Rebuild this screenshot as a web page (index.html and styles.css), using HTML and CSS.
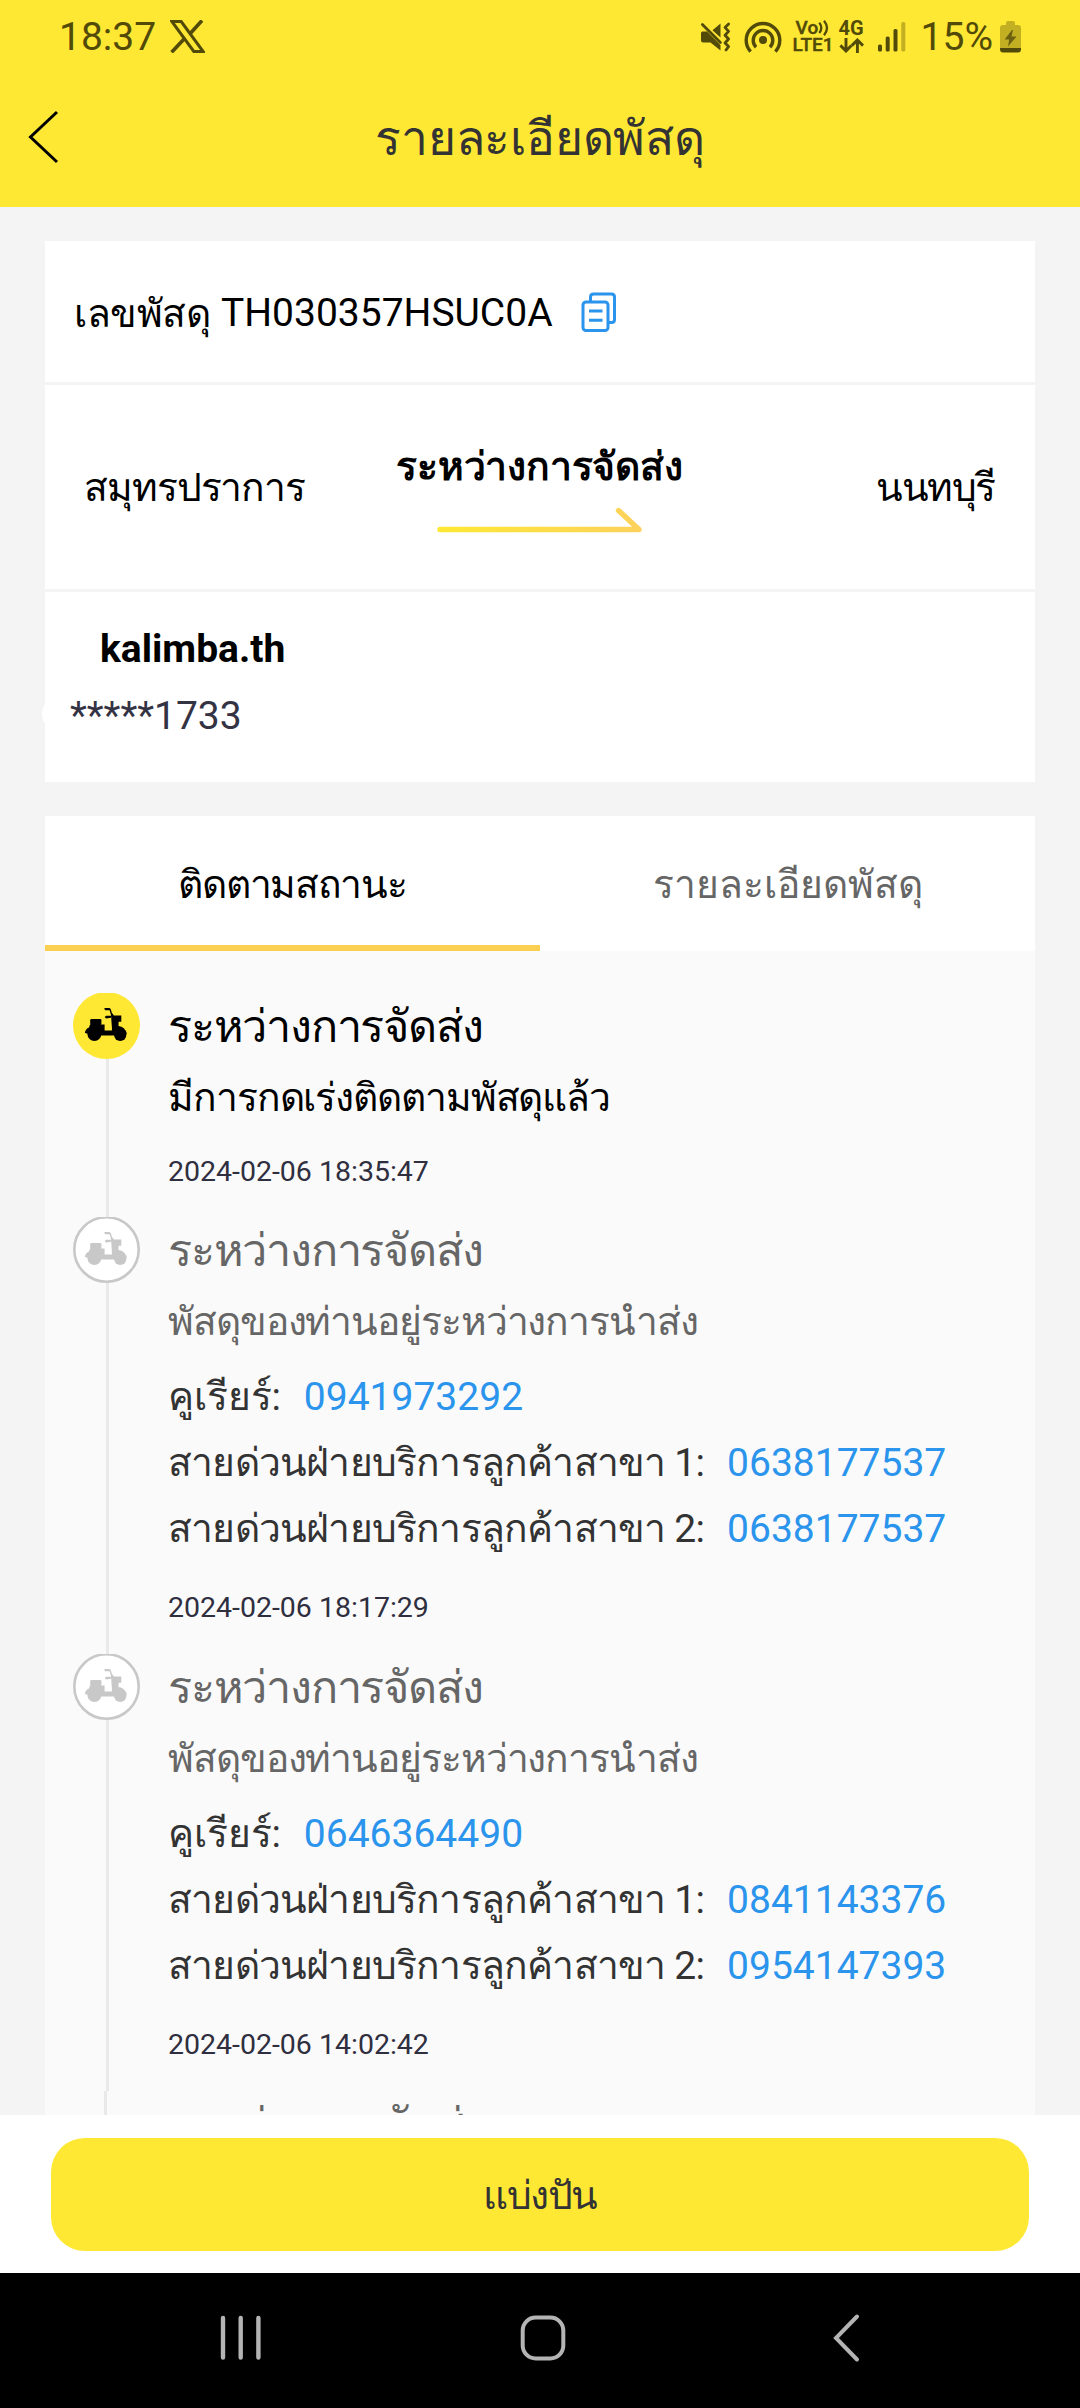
FILE: index.html
```
<!DOCTYPE html>
<html lang="th">
<head>
<meta charset="utf-8">
<title>รายละเอียดพัสดุ</title>
<link rel="stylesheet" href="styles.css">
</head>
<body>
<svg class="defs" aria-hidden="true">
  <symbol id="scooter" viewBox="0 1 67 66">
    <g fill="currentColor" stroke="none">
      <rect x="17.2" y="27" width="11.2" height="6" rx="1.2"/>
      <path d="M17 32.6H31.6V38.6H38.8L39 37L37.900 21.500H39.600L40.800 23.600H48.300V29.700H45.600L45.500 34Q52 35 53.800 41.400L52.600 42.300L50 43.600H24L13.500 41.500L11.800 40.800Q12.600 36.800 16 35.400Z"/>
      <path d="M31.300 16H36.600L37.800 17.200L39.200 22L37.900 22.400L36.600 18.300H32Z"/>
      <path d="M31.700 25L33.200 23.700H38V25.800L33 26.500Z"/>
      <circle cx="21.400" cy="42.200" r="6.900"/>
      <circle cx="47.200" cy="42.800" r="6.200"/>
    </g>
  </symbol>
</svg>
<div class="screen">
  <header class="top">
    <div class="status">
      <span class="clock">18:37</span>
      <svg class="x-logo" width="35" height="33" viewBox="0 0 35 33" fill="none"><path d="M2 1.6H11.2L33 31.4H23.8Z" stroke="#514a08" stroke-width="3"/><path d="M32 .5L19.8 14M1.6 32.3L15 18" stroke="#514a08" stroke-width="3.6"/></svg>
      <svg class="mute" width="31" height="30" viewBox="0 0 31 30" fill="#514a08"><path d="M2.5 9.5H7L20.5 23V28.5L10.5 20.5H3Q1 20.5 1 18.5V11Q1 9.5 2.5 9.5ZM12.5 8.2L20.5 1.4V15.5Z"/><path d="M2.4 2.6L20.4 20.6M28.6 2L25 5.4L28.6 9.4L25 13.2L28.6 17L25 21L28.6 24.6L26 28" fill="none" stroke="#514a08" stroke-width="2.8" stroke-linecap="round" stroke-linejoin="round"/></svg>
      <svg class="cast" width="38" height="32" viewBox="0 0 38 32" fill="none" stroke="#514a08" stroke-width="3.4"><circle cx="19" cy="19" r="4" fill="#514a08" stroke="none"/><path d="M6.600 30.600A16.800 16.800 0 1 1 31.400 30.600M12 26.200A9.800 9.800 0 1 1 26 26.200"/></svg>
      <div class="lte"><span class="vo">Vo<svg width="12" height="16" viewBox="0 0 12 16" fill="none" stroke="#514a08" stroke-width="2.300"><path d="M1.300 2.600Q5.300 8 1.300 13M6 .8Q12 8 6 15.200"/></svg></span><span>LTE1</span></div>
      <div class="net"><span>4G</span><svg width="25" height="15" viewBox="0 0 25 15" fill="none" stroke="#514a08" stroke-width="2.900"><path d="M7 0V13M1.400 7.400L7 13L12.400 7.400M18.400 15V2M12.800 7.600L18.400 2L24 7.600"/></svg></div>
      <svg class="bars" width="28" height="30" viewBox="0 0 28 30" fill="#514a08"><rect x="0" y="22.500" width="4" height="7" rx="1.600"/><rect x="7.700" y="14.500" width="4" height="15" rx="1.600"/><rect x="15.500" y="7" width="4" height="22.500" rx="1.600"/><rect x="23.300" y="0" width="4" height="29.500" rx="1.600" fill="#c2b022"/></svg>
      <span class="percent">15%</span>
      <svg class="battery" width="21" height="32" viewBox="0 0 21 32"><path d="M6 4V2Q6 0 8 0H13Q15 0 15 2V4H18Q21 4 21 7V27H0V7Q0 4 3 4Z" fill="#c2b022"/><path d="M0 27H21V28Q21 31.600 18 31.600H3Q0 31.600 0 28Z" fill="#514a08"/><path d="M12 9L4.600 18.600H9.200L8 25.500L16.500 15.500H11.500L13 9Z" fill="#6b6110"/></svg>
    </div>
    <div class="appbar">
      <svg class="back" width="32" height="54" viewBox="0 0 32 54" fill="none" stroke="#000" stroke-width="3"><path d="M30 2L3.500 27L30 52"/></svg>
      <h1>รายละเอียดพัสดุ</h1>
    </div>
  </header>

  <main class="content">
    <section class="card">
      <div class="row number">
        <span class="label">เลขพัสดุ</span><span>TH030357HSUC0A</span>
        <svg class="copy" width="36" height="42" viewBox="0 0 36 42" fill="none" stroke="#2b94ec" stroke-width="3"><rect x="2" y="11" width="25" height="28.500" rx="3"/><path d="M9.500 10V6Q9.500 3 12.500 3H30.500Q33.500 3 33.500 6V28.500Q33.500 31.500 30.500 31.500H28M8 20H21.500M8 29.300H21.500"/></svg>
      </div>
      <div class="row route">
        <span class="origin">สมุทรปราการ</span>
        <div class="progress">
          <b>ระหว่างการจัดส่ง</b>
          <svg width="206" height="30" viewBox="0 0 206 30" fill="none"><defs><linearGradient id="arrow" gradientUnits="userSpaceOnUse" x1="0" y1="0" x2="206" y2="0"><stop offset="0" stop-color="#ffe833"/><stop offset="1" stop-color="#fdd15c"/></linearGradient></defs><path d="M3 24.500H202L181.500 5.500" stroke="url(#arrow)" stroke-width="5.400" stroke-linecap="round" stroke-linejoin="round"/></svg>
        </div>
        <span class="dest">นนทบุรี</span>
      </div>
      <div class="row person">
        <b>kalimba.th</b>
        <span>*****1733</span>
      </div>
    </section>

    <section class="tracking">
      <nav class="tabs">
        <span class="tab active">ติดตามสถานะ</span>
        <span class="tab">รายละเอียดพัสดุ</span>
      </nav>
      <ol class="timeline">
        <li class="event current">
          <div class="marker"><svg width="67" height="66" viewBox="0 1 67 66"><circle cx="33.500" cy="33.500" r="33.500" fill="#ffe833"/><use href="#scooter" width="67" height="66" y="1"/></svg></div>
          <div class="info">
            <h2>ระหว่างการจัดส่ง</h2>
            <p class="note">มีการกดเร่งติดตามพัสดุแล้ว</p>
            <time>2024-02-06 18:35:47</time>
          </div>
        </li>
        <li class="event">
          <div class="marker"><svg width="67" height="66" viewBox="0 1 67 66"><circle cx="33.500" cy="33.500" r="32.200" fill="#fff" stroke="#c8c8c8" stroke-width="2.600"/><use href="#scooter" width="67" height="66" y="1"/></svg></div>
          <div class="info">
            <h2>ระหว่างการจัดส่ง</h2>
            <p class="note">พัสดุของท่านอยู่ระหว่างการนำส่ง</p>
            <div class="phones">
              <p class="courier">คูเรียร์:<a>0941973292</a></p>
              <p>สายด่วนฝ่ายบริการลูกค้าสาขา 1:<a>0638177537</a></p>
              <p>สายด่วนฝ่ายบริการลูกค้าสาขา 2:<a>0638177537</a></p>
            </div>
            <time>2024-02-06 18:17:29</time>
          </div>
        </li>
        <li class="event">
          <div class="marker"><svg width="67" height="66" viewBox="0 1 67 66"><circle cx="33.500" cy="33.500" r="32.200" fill="#fff" stroke="#c8c8c8" stroke-width="2.600"/><use href="#scooter" width="67" height="66" y="1"/></svg></div>
          <div class="info">
            <h2>ระหว่างการจัดส่ง</h2>
            <p class="note">พัสดุของท่านอยู่ระหว่างการนำส่ง</p>
            <div class="phones">
              <p class="courier">คูเรียร์:<a>0646364490</a></p>
              <p>สายด่วนฝ่ายบริการลูกค้าสาขา 1:<a>0841143376</a></p>
              <p>สายด่วนฝ่ายบริการลูกค้าสาขา 2:<a>0954147393</a></p>
            </div>
            <time>2024-02-06 14:02:42</time>
          </div>
        </li>
        <li class="event plain">
          <div class="marker"></div>
          <div class="info"><h2>ระหว่างการจัดส่ง</h2></div>
        </li>
      </ol>
    </section>
  </main>

  <footer class="share"><button class="share-btn">แบ่งปัน</button></footer>

  <div class="navbar">
    <svg width="42" height="46" viewBox="0 0 42 46" stroke="#b4b4b4" stroke-width="4.400" stroke-linecap="round"><path d="M3 3V42.500M20.700 3V42.500M38.400 3V42.500"/></svg>
    <svg class="home" width="46" height="46" viewBox="0 0 46 46" fill="none" stroke="#b4b4b4" stroke-width="4"><rect x="2.700" y="2.500" width="40.600" height="41" rx="13"/></svg>
    <svg width="28" height="50" viewBox="0 0 28 50" fill="none" stroke="#b4b4b4" stroke-width="4" stroke-linecap="round"><path d="M25 3.500L4 25L25 46.500"/></svg>
  </div>
</div>
</body>
</html>
```
FILE: styles.css
```
* { box-sizing: border-box; }
body {
  margin: 0;
  font-family: Roboto, sans-serif;
  font-size: 39px;
  color: #000;
  background: #f4f4f4;
}
h1, h2, p, ol { margin: 0; padding: 0; font-weight: 400; list-style: none; }
svg { display: block; flex: none; }
span, b, p, h1, h2, time { white-space: nowrap; }
.defs { position: absolute; width: 0; height: 0; }

.screen {
  width: 1080px;
  height: 2408px;
  display: flex;
  flex-direction: column;
  overflow: hidden;
}

/* Header */
.top { height: 207px; background: #ffe833; flex: none; }
.status {
  height: 71px;
  padding: 2px 59px 0 59px;
  display: flex;
  align-items: center;
  color: #514a08;
  line-height: 40px;
}
.x-logo { margin-left: 14px; }
.mute { margin-left: auto; }
.cast { margin-left: 13px; }
.lte, .net {
  display: flex;
  flex-direction: column;
  font-weight: 500;
  font-size: 19px;
  line-height: 17.5px;
}
.lte { margin-left: 11px; width: 39px; -webkit-text-stroke: .4px #514a08; }
.vo { display: flex; align-items: center; padding-left: 3px; height: 17px; }
.net { margin-left: 7px; width: 26px; font-size: 20px; font-weight: 700; gap: 1px; }
.bars { margin-left: 13px; }
.percent { margin-left: 15px; }
.battery { margin-left: 7px; }
.appbar {
  height: 136px;
  display: grid;
  grid-template-columns: 120px 1fr 120px;
  align-items: center;
}
.back { margin: -5px 0 0 27px; }
h1 { text-align: center; font-size: 48px; line-height: 70px; letter-spacing: -.2px; color: #333; }

/* Content */
.content {
  flex: 1;
  min-height: 0;
  overflow: hidden;
  padding: 34px 45px 0;
  display: flex;
  flex-direction: column;
  gap: 34px;
}
.card { display: flex; flex-direction: column; gap: 3px; flex: none; }
.row { background: #fff; }
.number {
  height: 141px;
  padding: 2px 0 0 29px;
  display: flex;
  align-items: center;
}
.label { width: 147px; letter-spacing: -.5px; }
.copy { margin-left: 28px; margin-top: -2px; }
.route {
  height: 204px;
  padding: 2px 40px 0 39px;
  display: grid;
  grid-template-columns: 1fr auto 1fr;
  align-items: center;
  line-height: 52px;
}
.origin { letter-spacing: -1.1px; }
.progress { display: flex; flex-direction: column; align-items: center; gap: 12px; }
.progress b { letter-spacing: -.2px; }
.dest { text-align: right; letter-spacing: -1.4px; }
.person {
  position: relative;
  height: 190px;
  padding: 24px 0 0 25px;
  display: flex;
  flex-direction: column;
  line-height: 67px;
}
.person b { padding-left: 30px; }
.person span { position: relative; color: #333344; }
/* notch that peeks out of the card's left edge */
.person::before {
  content: "";
  position: absolute;
  left: -3px;
  top: 105px;
  width: 34px;
  height: 34px;
  border-radius: 50%;
  background: #fff;
}

/* Tabs */
.tracking { flex: none; }
.tabs { display: grid; grid-template-columns: 1fr 1fr; height: 135px; background: #fff; }
.tab {
  padding-top: 10px;
  text-align: center;
  line-height: 119px;
  color: #666;
  border-bottom: 6px solid transparent;
}
.tab.active { color: #000; letter-spacing: -1.3px; border-color: #fbd052; }

/* Timeline */
.timeline { background: #fafafa; padding: 42px 0 0 28px; }
.event { position: relative; height: 437px; display: flex; gap: 28px; }
.event::before {
  content: "";
  position: absolute;
  left: 33px;
  top: 0;
  bottom: 0;
  width: 3px;
  background: #e9e9e9;
}
.event.plain::before { left: 31px; }
.event.current { height: 224px; }
.marker { position: relative; width: 67px; color: #c8c8c8; flex: none; }
.current .marker { color: #000; }
.info { display: flex; flex-direction: column; color: #333; }
h2 { font-size: 45px; line-height: 67px; letter-spacing: -1.2px; color: #666; }
.note { padding-top: 2px; line-height: 73px; letter-spacing: -1.1px; color: #666; }
.current h2, .current .note { color: #000; }
.phones { padding: 5px 0 9px; line-height: 66px; letter-spacing: -.8px; }
.phones .courier { letter-spacing: -.1px; }
.phones a { margin-left: 23px; letter-spacing: 0; color: #2b94ec; }
time { font-size: 28.5px; line-height: 74px; color: #2f2f40; }

/* Footer */
.share { height: 158px; padding: 23px 51px 22px; background: #fff; flex: none; }
.share-btn {
  display: block;
  width: 100%;
  height: 113px;
  padding: 3px 0 0;
  border: 0;
  border-radius: 34px;
  background: #ffe833;
  color: #333;
  font: inherit;
  line-height: 60px;
  letter-spacing: -1.6px;
}
.navbar {
  height: 135px;
  background: #000;
  flex: none;
  padding: 0 220px 5px;
  display: flex;
  align-items: center;
  justify-content: space-between;
}
.home { margin-left: -8px; }
```
